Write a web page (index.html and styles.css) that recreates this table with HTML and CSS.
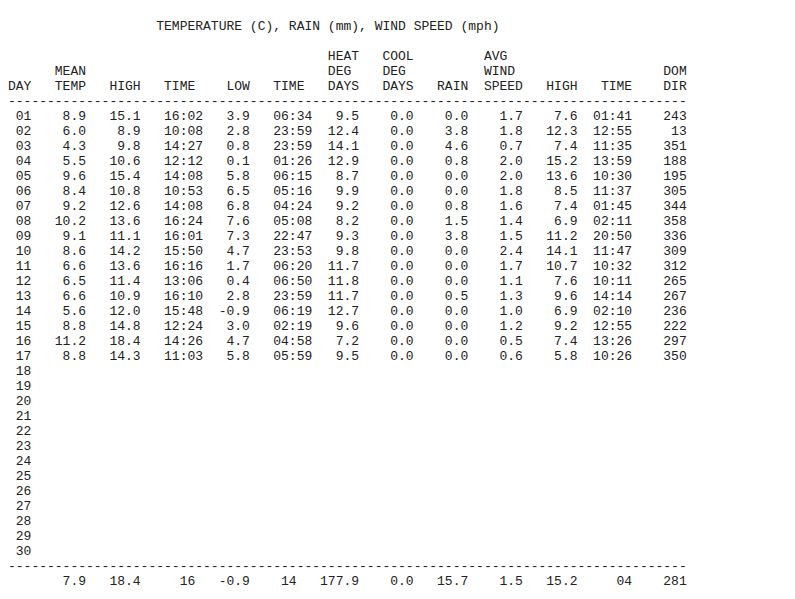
FILE: index.html
```
<!DOCTYPE html>
<html lang="en">
<head>
    <meta charset="UTF-8">
    <meta name="viewport" content="width=device-width, initial-scale=1.0">
    <title>NOAA monthly report</title>
    <link rel="stylesheet" href="styles.css">
</head>
<body>
    <!-- monthly climate summary, plain text -->
<pre class="report">
                   TEMPERATURE (C), RAIN (mm), WIND SPEED (mph)

                                         HEAT   COOL         AVG
      MEAN                               DEG    DEG          WIND                   DOM
DAY   TEMP   HIGH   TIME    LOW   TIME   DAYS   DAYS   RAIN  SPEED   HIGH   TIME    DIR
---------------------------------------------------------------------------------------
 01    8.9   15.1   16:02   3.9   06:34   9.5    0.0    0.0    1.7    7.6  01:41    243
 02    6.0    8.9   10:08   2.8   23:59  12.4    0.0    3.8    1.8   12.3  12:55     13
 03    4.3    9.8   14:27   0.8   23:59  14.1    0.0    4.6    0.7    7.4  11:35    351
 04    5.5   10.6   12:12   0.1   01:26  12.9    0.0    0.8    2.0   15.2  13:59    188
 05    9.6   15.4   14:08   5.8   06:15   8.7    0.0    0.0    2.0   13.6  10:30    195
 06    8.4   10.8   10:53   6.5   05:16   9.9    0.0    0.0    1.8    8.5  11:37    305
 07    9.2   12.6   14:08   6.8   04:24   9.2    0.0    0.8    1.6    7.4  01:45    344
 08   10.2   13.6   16:24   7.6   05:08   8.2    0.0    1.5    1.4    6.9  02:11    358
 09    9.1   11.1   16:01   7.3   22:47   9.3    0.0    3.8    1.5   11.2  20:50    336
 10    8.6   14.2   15:50   4.7   23:53   9.8    0.0    0.0    2.4   14.1  11:47    309
 11    6.6   13.6   16:16   1.7   06:20  11.7    0.0    0.0    1.7   10.7  10:32    312
 12    6.5   11.4   13:06   0.4   06:50  11.8    0.0    0.0    1.1    7.6  10:11    265
 13    6.6   10.9   16:10   2.8   23:59  11.7    0.0    0.5    1.3    9.6  14:14    267
 14    5.6   12.0   15:48  -0.9   06:19  12.7    0.0    0.0    1.0    6.9  02:10    236
 15    8.8   14.8   12:24   3.0   02:19   9.6    0.0    0.0    1.2    9.2  12:55    222
 16   11.2   18.4   14:26   4.7   04:58   7.2    0.0    0.0    0.5    7.4  13:26    297
 17    8.8   14.3   11:03   5.8   05:59   9.5    0.0    0.0    0.6    5.8  10:26    350
 18
 19
 20
 21
 22
 23
 24
 25
 26
 27
 28
 29
 30
---------------------------------------------------------------------------------------
       7.9   18.4     16   -0.9    14   177.9    0.0   15.7    1.5   15.2     04    281
</pre>
</body>
</html>
```

FILE: styles.css
```
body {
    margin: 0;
    background: #ffffff;
}

.report {
    margin: 19px 8px;
    font-family: "Courier New", "Liberation Mono", monospace;
    font-size: 13px;
    line-height: 15px;
    color: #222222;
}
```
